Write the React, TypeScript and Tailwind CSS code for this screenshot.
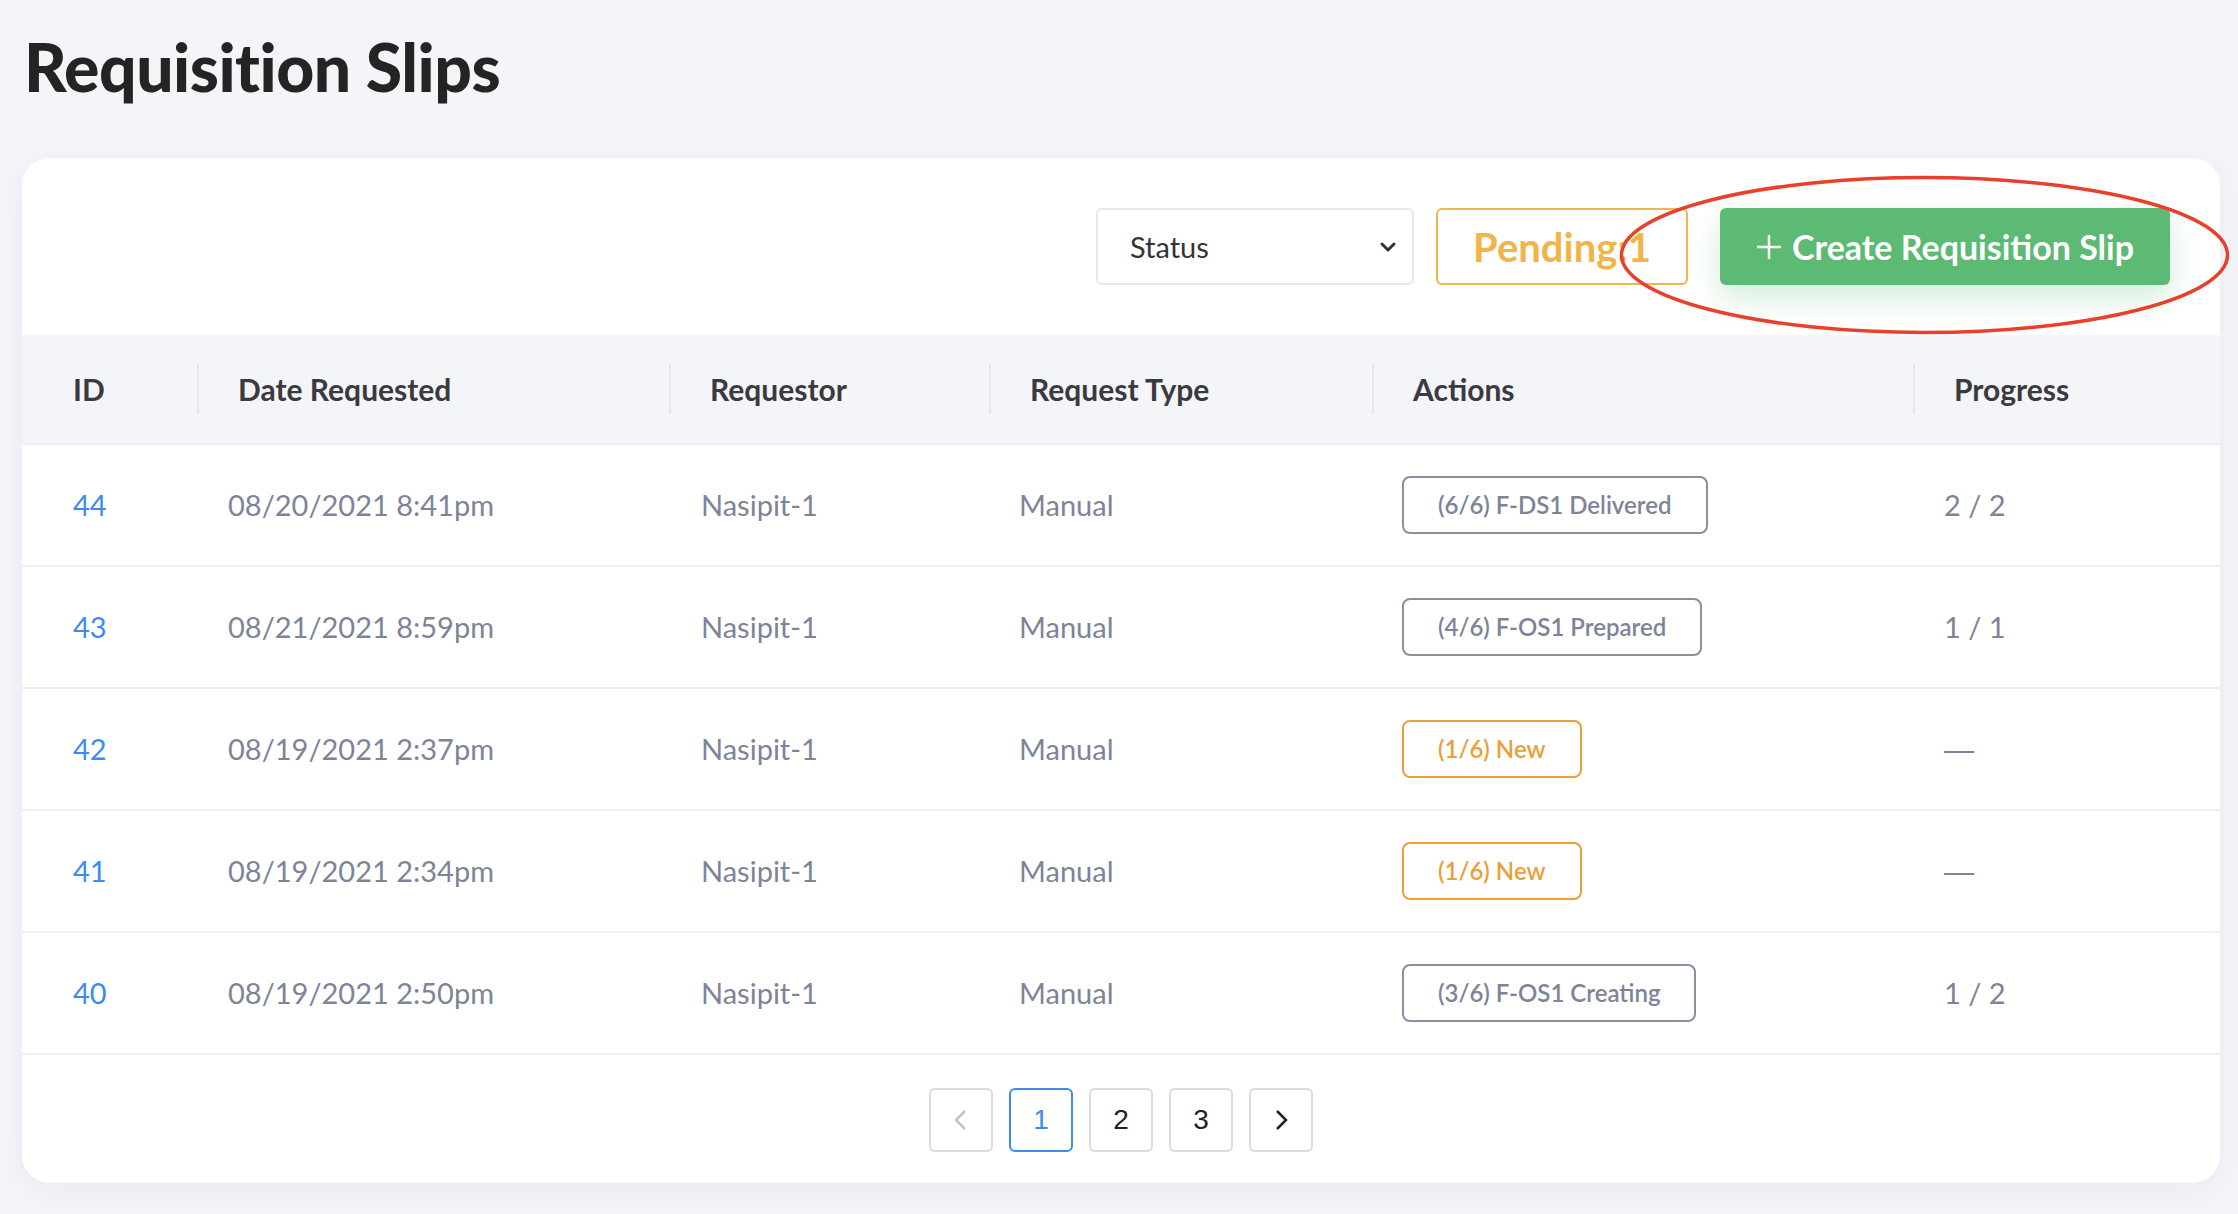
import React from 'react';

type Badge = { label: string; tone: 'gray' | 'orange' };

interface Slip {
  id: number;
  date: string;
  requestor: string;
  type: string;
  badge: Badge;
  progress: string;
}

const slips: Slip[] = [
  { id: 44, date: '08/20/2021 8:41pm', requestor: 'Nasipit-1', type: 'Manual', badge: { label: '(6/6) F-DS1 Delivered', tone: 'gray' }, progress: '2 / 2' },
  { id: 43, date: '08/21/2021 8:59pm', requestor: 'Nasipit-1', type: 'Manual', badge: { label: '(4/6) F-OS1 Prepared', tone: 'gray' }, progress: '1 / 1' },
  { id: 42, date: '08/19/2021 2:37pm', requestor: 'Nasipit-1', type: 'Manual', badge: { label: '(1/6) New', tone: 'orange' }, progress: '—' },
  { id: 41, date: '08/19/2021 2:34pm', requestor: 'Nasipit-1', type: 'Manual', badge: { label: '(1/6) New', tone: 'orange' }, progress: '—' },
  { id: 40, date: '08/19/2021 2:50pm', requestor: 'Nasipit-1', type: 'Manual', badge: { label: '(3/6) F-OS1 Creating', tone: 'gray' }, progress: '1 / 2' },
];

const headers = ['ID', 'Date Requested', 'Requestor', 'Request Type', 'Actions', 'Progress'];

const cols = 'grid grid-cols-[175px_472px_320px_383px_541px_1fr]';

const App: React.FC = () => {
  return (
    <div
      className="relative min-h-screen bg-[#f4f5f9] pl-[22px] pr-[18px] pb-[30px]"
      style={{ fontFamily: 'Lato, "Noto Sans", sans-serif' }}
    >
      {/* Page title */}
      <h1 className="h-[132px] mb-[26px] flex items-center pl-[2px] text-[66px] font-black text-[#242424] tracking-[-0.5px]">
        Requisition Slips
      </h1>

      {/* Card */}
      <div className="bg-white rounded-[28px] overflow-hidden shadow-[0_8px_30px_rgba(30,40,80,0.05)]">
        {/* Toolbar */}
        <div className="h-[177px] flex items-center justify-end pr-[50px]">
          <div className="w-[318px] h-[77px] border-2 border-[#e8e8ea] rounded-[6px] flex items-center justify-between pl-[32px] pr-[14px] text-[29px] text-[#333339]">
            <span>Status</span>
            <svg width="20" height="20" viewBox="0 0 20 20" fill="none">
              <path d="M4 7l6 6 6-6" stroke="#333339" strokeWidth="3" strokeLinecap="round" strokeLinejoin="round" />
            </svg>
          </div>
          <div className="ml-[22px] w-[252px] h-[77px] border-2 border-[#efb54b] rounded-[6px] flex items-center justify-center text-[40px] font-bold text-[#efb54b]">
            Pending:1
          </div>
          <button className="ml-[32px] w-[450px] h-[77px] bg-[#5cba74] rounded-[6px] flex items-center justify-center gap-[10px] text-[34px] font-bold text-white shadow-[0_12px_30px_rgba(92,186,116,0.28)]">
            <svg width="26" height="26" viewBox="0 0 26 26" fill="none">
              <path d="M13 1v24M1 13h24" stroke="white" strokeWidth="2.5" />
            </svg>
            Create Requisition Slip
          </button>
        </div>

        {/* Table header */}
        <div className={`${cols} h-[110px] bg-[#f4f5f9] border-b-2 border-[#eeeff2] text-[30px] font-bold text-[#3a3a40]`}>
          {headers.map((h, i) => (
            <div key={h} className={`relative flex items-center ${i === 0 ? 'pl-[51px]' : 'pl-[41px]'}`}>
              {i > 0 && <div className="absolute left-0 top-[29px] h-[50px] w-[2px] bg-[#e6e7ec]" />}
              {h}
            </div>
          ))}
        </div>

        {/* Rows */}
        {slips.map((s) => (
          <div key={s.id} className={`${cols} h-[122px] border-b-2 border-[#efeff1] text-[29px] text-[#7e8498]`}>
            <div className="flex items-center pl-[51px] text-[#3d8bf0]">{s.id}</div>
            <div className="flex items-center pl-[31px]">{s.date}</div>
            <div className="flex items-center pl-[32px]">{s.requestor}</div>
            <div className="flex items-center pl-[30px]">{s.type}</div>
            <div className="flex items-center pl-[30px]">
              <span
                className={
                  s.badge.tone === 'orange'
                    ? 'h-[58px] px-[34px] flex items-center border-2 border-[#eb9f3a] rounded-[8px] text-[24px] font-semibold text-[#eb9f3a]'
                    : 'h-[58px] px-[34px] flex items-center border-2 border-[#8a8fa2] rounded-[8px] text-[24px] font-semibold text-[#7e8498]'
                }
              >
                {s.badge.label}
              </span>
            </div>
            <div className="flex items-center pl-[31px]">
              {s.progress === '—' ? (
                <span className="text-[30px]" style={{ fontFamily: '"Liberation Sans", sans-serif' }}>—</span>
              ) : (
                s.progress
              )}
            </div>
          </div>
        ))}

        {/* Pagination */}
        <div className="flex justify-center gap-[16px] pt-[33px] pb-[31px]">
          <button className="w-[64px] h-[64px] border-2 border-[#dcdcdc] rounded-[6px] flex items-center justify-center">
            <svg width="20" height="24" viewBox="0 0 20 24" fill="none">
              <path d="M14 3L5 12l9 9" stroke="#c4c4c4" strokeWidth="2.5" />
            </svg>
          </button>
          <button className="w-[64px] h-[64px] border-2 border-[#3d8bf0] rounded-[6px] flex items-center justify-center text-[28px] text-[#3d8bf0]" style={{ fontFamily: '"Liberation Sans", sans-serif' }}>
            1
          </button>
          {[2, 3].map((n) => (
            <button key={n} className="w-[64px] h-[64px] border-2 border-[#dcdcdc] rounded-[6px] flex items-center justify-center text-[28px] text-[#222]" style={{ fontFamily: '"Liberation Sans", sans-serif' }}>
              {n}
            </button>
          ))}
          <button className="w-[64px] h-[64px] border-2 border-[#dcdcdc] rounded-[6px] flex items-center justify-center">
            <svg width="20" height="24" viewBox="0 0 20 24" fill="none">
              <path d="M6 3l9 9-9 9" stroke="#222" strokeWidth="2.5" />
            </svg>
          </button>
        </div>
      </div>

      {/* Red annotation ellipse drawn over the screenshot */}
      <svg className="absolute left-[1610px] top-[167px] pointer-events-none" width="630" height="180" viewBox="0 0 630 180" fill="none">
        <ellipse cx="314.5" cy="88" rx="303" ry="77.5" stroke="#e8402a" strokeWidth="3.5" />
      </svg>
    </div>
  );
};

export default App;
